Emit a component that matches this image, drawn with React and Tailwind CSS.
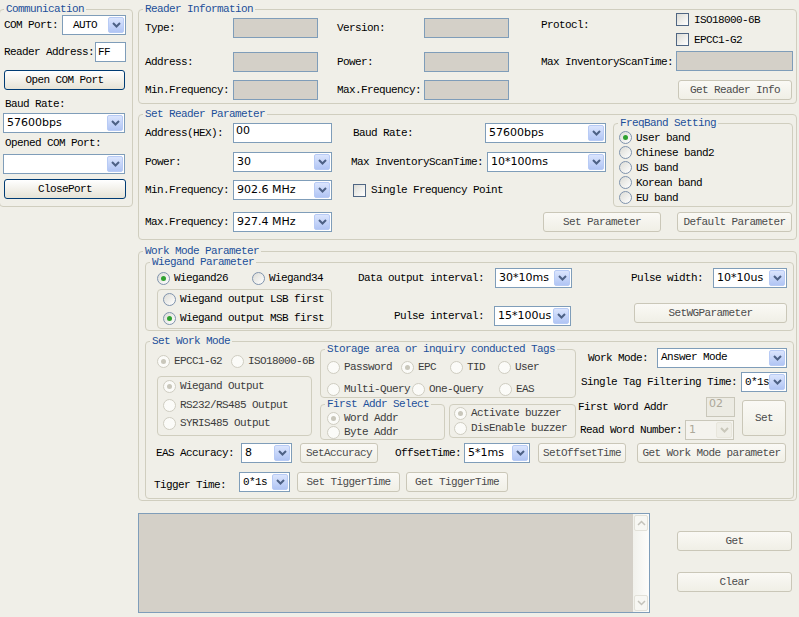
import React from 'react'

const SANS = "font-['Tahoma','DejaVu_Sans',sans-serif] tracking-normal"

function Group({ title, className = '', children }) {
  return (
    <fieldset className={`border border-[#d0cebf] rounded-[4px] min-w-0 shrink-0 ${className}`}>
      <legend className="ml-[4px] px-[2px] leading-[12px] text-[#1d4f9a]">{title}</legend>
      {children}
    </fieldset>
  )
}

function L({ className = '', children }) {
  return <span className={`shrink-0 whitespace-nowrap ${className}`}>{children}</span>
}

function RO({ className = 'w-[85px]' }) {
  return <div className={`h-[20px] shrink-0 bg-[#d4d0c8] border border-[#7f9db9] ${className}`} />
}

function TextBox({ className = '', value, sans, disabled }) {
  return (
    <div
      className={`h-[20px] shrink-0 border flex items-center px-[2px] ${
        disabled ? 'border-[#c9c7ba] bg-[#ecebe3] text-[#aca899]' : 'border-[#7f9db9] bg-white'
      } ${sans ? SANS : ''} ${className}`}
    >
      {value}
    </div>
  )
}

function Combo({ className = '', value, sans = true, disabled, valueClass = '' }) {
  return (
    <div
      className={`h-[20px] shrink-0 border flex p-px ${
        disabled ? 'border-[#c9c7ba] bg-[#f4f3ee] text-[#aca899]' : 'border-[#7f9db9] bg-white'
      } ${className}`}
    >
      <span className={`flex-1 min-w-0 flex items-center pl-[2px] whitespace-nowrap overflow-hidden ${sans ? SANS : ''} ${valueClass}`}>
        {value}
      </span>
      <span
        className={`w-[16px] shrink-0 rounded-[2px] border flex items-center justify-center ${
          disabled ? 'border-[#e8e6dc] bg-[#efeee7]' : 'border-[#b8cbf5] bg-linear-to-b from-[#dbe5fd] to-[#b1c5f4]'
        }`}
      >
        <svg width="9" height="6" viewBox="0 0 9 6">
          <path d="M1 1l3.5 3.5L8 1" fill="none" stroke={disabled ? '#c9c7ba' : '#4d6185'} strokeWidth="2" />
        </svg>
      </span>
    </div>
  )
}

function Btn({ className = '', strong, children }) {
  return (
    <button
      type="button"
      className={`h-[20px] shrink-0 flex items-center justify-center rounded-[3px] border whitespace-nowrap ${
        strong
          ? 'border-[#003c74] bg-linear-to-b from-white to-[#e6e3d6] text-black'
          : 'border-[#cac7b8] bg-linear-to-b from-[#faf9f5] to-[#f0efe6] text-[#4b4b4b]'
      } ${className}`}
    >
      {children}
    </button>
  )
}

function Radio({ label, checked, disabled, className = '' }) {
  return (
    <div className={`flex items-center gap-[4px] h-[14px] shrink-0 whitespace-nowrap ${disabled ? 'text-[#3c3c3c]' : ''} ${className}`}>
      <span
        className={`w-[13px] h-[13px] rounded-full border flex items-center justify-center shrink-0 ${
          disabled ? 'border-[#cfcdc1] bg-[#fbfbf8]' : 'border-[#7f93ad] bg-linear-to-br from-[#dcdcd6] to-white'
        }`}
      >
        {checked && (
          <span className={`w-[5px] h-[5px] rounded-full ${disabled ? 'bg-[#c9c7bb]' : 'bg-[#2fa12f]'}`} />
        )}
      </span>
      {label}
    </div>
  )
}

function Check({ label, className = '' }) {
  return (
    <div className={`flex items-center gap-[5px] h-[13px] shrink-0 whitespace-nowrap ${className}`}>
      <span className="w-[13px] h-[13px] shrink-0 border border-[#4f6683] bg-linear-to-br from-[#dcdcd6] to-white" />
      {label}
    </div>
  )
}

function ScrollArrow({ up }) {
  return (
    <div className="h-[16px] rounded-[2px] border border-[#e2e1d9] bg-[#f7f7f3] flex items-center justify-center">
      <svg width="9" height="6" viewBox="0 0 9 6">
        <path d={up ? 'M1 5l3.5-3.5L8 5' : 'M1 1l3.5 3.5L8 1'} fill="none" stroke="#c4c3bb" strokeWidth="1.5" />
      </svg>
    </div>
  )
}

export default function App() {
  return (
    <div className="w-[799px] h-[617px] overflow-hidden bg-[#f0efe8] text-black flex items-start font-['Liberation_Mono',monospace] text-[11px] leading-[12px] tracking-[-0.6px]">
      {/* Communication */}
      <div className="w-[134px] shrink-0 -ml-px mt-[3px]">
        <Group title="Communication" className="w-[134px]">
          <div className="pl-[4px] pb-[7px]">
            <div className="flex items-center h-[20px]">
              <L className="w-[58px]">COM Port:</L>
              <Combo className="w-[64px]" value="AUTO" sans={false} valueClass="pl-[9px]" />
            </div>
            <div className="flex items-center h-[20px] mt-[7px]">
              <L className="w-[91px]">Reader Address:</L>
              <TextBox className="w-[31px]" value="FF" />
            </div>
            <Btn strong className="w-[121px] mt-[8px]">Open COM Port</Btn>
            <div className="mt-[8px] pl-px">Baud Rate:</div>
            <Combo className="w-[122px] mt-[3px] -ml-px" value="57600bps" />
            <div className="mt-[4px] pl-px">Opened COM Port:</div>
            <Combo className="w-[122px] mt-[5px] -ml-px" value="" />
            <Btn strong className="w-[122px] mt-[5px]">ClosePort</Btn>
          </div>
        </Group>
      </div>

      <div className="ml-[5px] w-[659px] shrink-0 mt-[3px]">
        {/* Reader Information */}
        <Group title="Reader Information" className="w-[659px]">
          <div className="pl-[6px] pb-[3px]">
            <div className="flex items-start h-[32px]">
              <div className="flex items-center h-[20px] mt-[3px]">
                <L className="w-[88px]">Type:</L>
                <RO />
              </div>
              <div className="flex items-center h-[20px] mt-[3px] ml-[19px]">
                <L className="w-[87px]">Version:</L>
                <RO />
              </div>
              <L className="w-[135px] ml-[32px] mt-[4px]">Protocl:</L>
              <div className="flex flex-col gap-[7px] -mt-[2px]">
                <Check label="ISO18000-6B" />
                <Check label="EPCC1-G2" />
              </div>
            </div>
            <div className="flex items-center h-[20px] mt-[5px]">
              <L className="w-[88px]">Address:</L>
              <RO />
              <L className="w-[87px] ml-[19px]">Power:</L>
              <RO />
              <L className="w-[135px] ml-[32px]">Max InventoryScanTime:</L>
              <RO className="w-[117px] -mt-[2px]" />
            </div>
            <div className="flex items-center h-[20px] mt-[8px]">
              <L className="w-[88px]">Min.Frequency:</L>
              <RO />
              <L className="w-[87px] ml-[19px]">Max.Frequency:</L>
              <RO />
              <Btn className="w-[114px] ml-[169px]">Get Reader Info</Btn>
            </div>
          </div>
        </Group>

        {/* Set Reader Parameter */}
        <Group title="Set Reader Parameter" className="w-[659px] mt-[4px]">
          <div className="pb-[7px]">
            <div className="flex items-start">
              <div className="pl-[6px] w-[467px] shrink-0">
                <div className="flex items-center h-[20px] mt-[3px]">
                  <L className="w-[88px]">Address(HEX):</L>
                  <TextBox className="w-[99px] items-start pt-px" value="00" sans />
                  <L className="w-[132px] ml-[21px]">Baud Rate:</L>
                  <Combo className="w-[121px]" value="57600bps" />
                </div>
                <div className="flex items-center h-[20px] mt-[9px]">
                  <L className="w-[88px]">Power:</L>
                  <Combo className="w-[99px]" value="30" />
                  <L className="w-[136px] ml-[19px]">Max InventoryScanTime:</L>
                  <Combo className="w-[119px]" value="10*100ms" />
                </div>
                <div className="flex items-center h-[20px] mt-[8px]">
                  <L className="w-[88px]">Min.Frequency:</L>
                  <Combo className="w-[99px]" value="902.6 MHz" />
                  <Check className="ml-[21px]" label="Single Frequency Point" />
                </div>
              </div>
              <Group title="FreqBand Setting" className="w-[180px] ml-[7px] -mt-[3px]">
                <div className="pl-[5px] pt-px pb-px flex flex-col">
                  <div className="h-[15px] flex items-center"><Radio checked label="User band" /></div>
                  <div className="h-[15px] flex items-center"><Radio label="Chinese band2" /></div>
                  <div className="h-[15px] flex items-center"><Radio label="US band" /></div>
                  <div className="h-[15px] flex items-center"><Radio label="Korean band" /></div>
                  <div className="h-[15px] flex items-center"><Radio label="EU band" /></div>
                </div>
              </Group>
            </div>
            <div className="flex items-center h-[20px] mt-[5px] pl-[6px]">
              <L className="w-[88px]">Max.Frequency:</L>
              <Combo className="w-[99px]" value="927.4 MHz" />
              <Btn className="w-[118px] ml-[211px]">Set Parameter</Btn>
              <Btn className="w-[115px] ml-[16px]">Default Parameter</Btn>
            </div>
          </div>
        </Group>

        {/* Work Mode Parameter */}
        <Group title="Work Mode Parameter" className="w-[659px] mt-[5px]">
          <div className="pl-[6px] pb-px">
            <Group title="Wiegand Parameter" className="w-[649px] -mt-px">
              <div className="pl-[11px] pb-px">
                <div className="flex items-center h-[20px]">
                  <Radio checked label="Wiegand26" className="w-[95px]" />
                  <Radio label="Wiegand34" className="w-[106px]" />
                  <L className="w-[137px]">Data output interval:</L>
                  <Combo className="w-[77px]" value="30*10ms" />
                  <L className="w-[82px] ml-[59px]">Pulse width:</L>
                  <Combo className="w-[74px]" value="10*10us" />
                </div>
                <div className="flex items-start">
                  <div className="mt-px w-[175px] h-[40px] shrink-0 border border-[#d0cebf] rounded-[4px] pl-[5px] pt-[2px] flex flex-col gap-[5px]">
                    <Radio label="Wiegand output LSB first" />
                    <Radio checked label="Wiegand output MSB first" />
                  </div>
                  <div className="flex items-center h-[20px] mt-[18px] ml-[62px]">
                    <L className="w-[100px]">Pulse interval:</L>
                    <Combo className="w-[77px]" value="15*100us" />
                  </div>
                  <Btn className="w-[153px] ml-[63px] mt-[15px]">SetWGParameter</Btn>
                </div>
              </div>
            </Group>

            <Group title="Set Work Mode" className="w-[649px] mt-[4px]">
              <div className="pb-[6px]">
                <div className="flex items-start">
                  {/* col 1 */}
                  <div className="ml-[11px] w-[155px] shrink-0">
                    <div className="flex items-center mt-[7px]">
                      <Radio disabled checked label="EPCC1-G2" className="w-[74px]" />
                      <Radio disabled label="ISO18000-6B" />
                    </div>
                    <div className="mt-[8px] h-[60px] border border-[#d0cebf] rounded-[4px] pl-[5px]">
                      <Radio disabled checked label="Wiegand Output" className="mt-[2px]" />
                      <Radio disabled label="RS232/RS485 Output" className="mt-[5px]" />
                      <Radio disabled label="SYRIS485 Output" className="mt-[4px]" />
                    </div>
                  </div>
                  {/* col 2 */}
                  <div className="ml-[8px] w-[256px] shrink-0 -mt-[4px]">
                    <Group title="Storage area or inquiry conducted Tags" className="w-[256px]">
                      <div className="pl-[6px] pb-px">
                        <div className="flex items-center mt-[5px]">
                          <Radio disabled label="Password" className="w-[74px]" />
                          <Radio disabled checked label="EPC" className="w-[49px]" />
                          <Radio disabled label="TID" className="w-[48px]" />
                          <Radio disabled label="User" />
                        </div>
                        <div className="flex items-center mt-[8px]">
                          <Radio disabled label="Multi-Query" className="w-[85px]" />
                          <Radio disabled label="One-Query" className="w-[87px]" />
                          <Radio disabled label="EAS" />
                        </div>
                      </div>
                    </Group>
                    <div className="flex items-start">
                      <Group title="First Addr Select" className="w-[125px]">
                        <div className="pl-[6px] pt-px flex flex-col">
                          <Radio disabled checked label="Word Addr" className="h-[13px]" />
                          <Radio disabled label="Byte Addr" className="h-[13px]" />
                        </div>
                      </Group>
                      <div className="ml-[4px] mt-[6px] w-[127px] h-[34px] shrink-0 border border-[#d0cebf] rounded-[4px] pl-[4px] pt-px flex flex-col gap-px">
                        <Radio disabled checked label="Activate buzzer" />
                        <Radio disabled label="DisEnable buzzer" />
                      </div>
                    </div>
                  </div>
                  {/* col 3 */}
                  <div className="ml-[2px] w-[209px] shrink-0">
                    <div className="flex items-center h-[20px] mt-px pl-[10px]">
                      <L className="w-[69px]">Work Mode:</L>
                      <Combo className="w-[130px]" value="Answer Mode" sans={false} valueClass="items-start pt-px" />
                    </div>
                    <div className="flex items-center h-[20px] mt-[4px] pl-[3px]">
                      <L className="w-[160px]">Single Tag Filtering Time:</L>
                      <Combo className="w-[46px]" value="0*1s" sans={false} />
                    </div>
                    <div className="flex items-start mt-[5px]">
                      <div className="w-[158px] shrink-0">
                        <div className="flex items-center h-[20px]">
                          <L className="w-[128px]">First Word Addr</L>
                          <TextBox disabled sans className="w-[29px] items-start" value="02" />
                        </div>
                        <div className="flex items-center h-[19px] mt-[3px] pl-[2px]">
                          <L className="w-[105px]">Read Word Number:</L>
                          <Combo disabled className="w-[49px] h-[19px]" value="1" />
                        </div>
                      </div>
                      <Btn className="w-[44px] h-[36px] ml-[6px] mt-[3px]">Set</Btn>
                    </div>
                  </div>
                </div>

                <div className="flex items-center h-[20px] mt-[3px] pl-[10px]">
                  <L className="w-[85px]">EAS Accuracy:</L>
                  <Combo className="w-[51px]" value="8" />
                  <Btn className="w-[78px] ml-[8px]">SetAccuracy</Btn>
                  <L className="w-[69px] ml-[17px]">OffsetTime:</L>
                  <Combo className="w-[66px]" value="5*1ms" />
                  <Btn className="w-[88px] ml-[8px]">SetOffsetTime</Btn>
                  <Btn className="w-[149px] ml-[11px]">Get Work Mode parameter</Btn>
                </div>
                <div className="flex items-center h-[20px] mt-[9px] pl-[8px]">
                  <L className="w-[85px] pt-[5px]">Tigger Time:</L>
                  <Combo className="w-[51px]" value="0*1s" sans={false} />
                  <Btn className="w-[103px] ml-[7px]">Set TiggerTime</Btn>
                  <Btn className="w-[102px] ml-[6px]">Get TiggerTime</Btn>
                </div>
              </div>
            </Group>
          </div>
        </Group>

        {/* output area */}
        <div className="flex items-start mt-[12px]">
          <div className="w-[512px] h-[100px] shrink-0 border border-[#7f9db9] bg-[#d4d0c8] flex justify-end">
            <div className="w-[16px] h-full bg-linear-to-r from-[#f1f1ec] to-[#fdfdfb] flex flex-col justify-between p-px">
              <ScrollArrow up />
              <ScrollArrow />
            </div>
          </div>
          <div className="ml-[27px] w-[115px] shrink-0">
            <Btn className="w-[115px] mt-[18px]">Get</Btn>
            <Btn className="w-[115px] mt-[21px]">Clear</Btn>
          </div>
        </div>
      </div>
    </div>
  )
}
